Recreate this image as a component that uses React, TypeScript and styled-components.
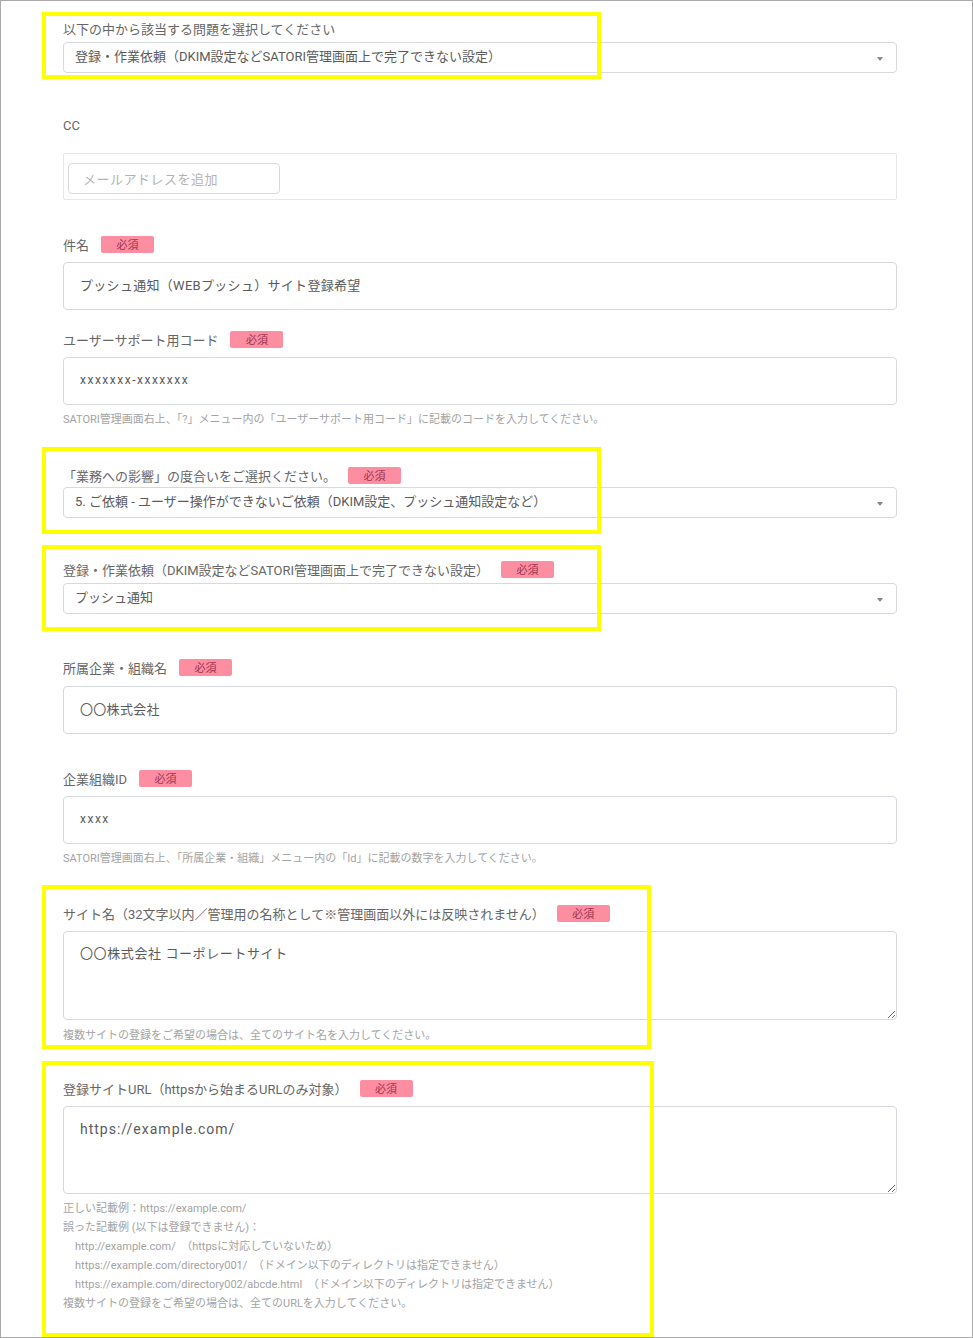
import React from 'react';
import styled, { createGlobalStyle } from 'styled-components';

const GlobalStyle = createGlobalStyle`
body {
  margin: 0;
  background: #fff;
  font-family: Roboto, "Noto Sans CJK JP", sans-serif;
}
`

const Frame = styled.div`
position: relative;
width: 973px;
height: 1338px;
box-sizing: border-box;
border: 1px solid #a9a9a9;
background: #fff;
padding: 0 75px 0 62px;
overflow: hidden;
`

const Form = styled.div`
display: flex;
flex-direction: column;
`

const Field = styled.div<{ $top: number }>`
display: flex;
flex-direction: column;
margin-top: ${p => p.$top}px;
`

const LabelRow = styled.div<{ $gap: number }>`
display: flex;
align-items: center;
gap: 12px;
height: 18px;
margin-bottom: ${p => p.$gap}px;
font-size: 13px;
color: #666;
white-space: nowrap;
`

const Badge = styled.span`
display: inline-flex;
align-items: center;
justify-content: center;
width: 53px;
height: 17px;
box-sizing: border-box;
border-radius: 2px;
background: #fd8ea1;
color: #9c3450;
font-size: 11px;
`

const SelectBox = styled.div`
position: relative;
display: flex;
align-items: center;
height: 31px;
box-sizing: border-box;
padding: 0 30px 5px 11px;
border: 1px solid #d6d9dd;
border-radius: 4px;
font-size: 13px;
color: #5a5a5a;
white-space: nowrap;

&::after {
  content: '';
  position: absolute;
  right: 13px;
  top: 50%;
  margin-top: -1px;
  border-left: 3.5px solid transparent;
  border-right: 3.5px solid transparent;
  border-top: 4px solid #888;
}
`

const TextInput = styled.input`
height: 48px;
box-sizing: border-box;
padding: 0 16px 3px;
border: 1px solid #d6d9dd;
border-radius: 4px;
font-family: Roboto, "Noto Sans CJK JP", sans-serif;
font-size: 13px;
letter-spacing: 0.3px;
color: #5a5a5a;
outline: none;
`

const CodeInput = styled(TextInput)`
font-size: 12px;
letter-spacing: 1.5px;
`

const TextArea = styled.textarea<{ $h: number }>`
height: ${p => p.$h}px;
box-sizing: border-box;
padding: 13px 16px;
border: 1px solid #d6d9dd;
border-radius: 4px;
font-family: Roboto, "Noto Sans CJK JP", sans-serif;
font-size: 13px;
line-height: 18px;
letter-spacing: 0.6px;
color: #5a5a5a;
outline: none;
resize: vertical;
`

const UrlArea = styled(TextArea)`
font-size: 14px;
letter-spacing: 1px;
`

const TagBox = styled.div`
height: 47px;
box-sizing: border-box;
padding: 9px 4px 5px;
border: 1px solid #e6e7e9;
border-radius: 2px;
`

const TagInput = styled.div`
display: flex;
align-items: center;
width: 212px;
height: 31px;
box-sizing: border-box;
padding: 0 14px;
border: 1px solid #d6d9dd;
border-radius: 4px;
font-size: 13px;
color: #b3b3b3;
letter-spacing: 0.5px;
`

const Hint = styled.div<{ $top: number; $lh: number }>`
margin-top: ${p => p.$top}px;
font-size: 11px;
line-height: ${p => p.$lh}px;
color: #a3a3a3;
white-space: nowrap;
`

const HintLine = styled.div<{ $indent?: boolean }>`
padding-left: ${p => (p.$indent ? 12 : 0)}px;
`

const Highlight = styled.div<{ $x: number; $y: number; $w: number; $h: number }>`
position: absolute;
left: ${p => p.$x}px;
top: ${p => p.$y}px;
width: ${p => p.$w}px;
height: ${p => p.$h}px;
box-sizing: border-box;
border: 4px solid #ffff00;
pointer-events: none;
`

const Required = () => <Badge>必須</Badge>

export default function App() {
    return (
        <>
            <GlobalStyle />
            <Frame>
                <Form>
                    <Field $top={18}>
                        <LabelRow $gap={5}>以下の中から該当する問題を選択してください</LabelRow>
                        <SelectBox>登録・作業依頼（DKIM設定などSATORI管理画面上で完了できない設定）</SelectBox>
                    </Field>

                    <Field $top={43}>
                        <LabelRow $gap={19}>CC</LabelRow>
                        <TagBox>
                            <TagInput>メールアドレスを追加</TagInput>
                        </TagBox>
                    </Field>

                    <Field $top={35}>
                        <LabelRow $gap={9}>件名<Required /></LabelRow>
                        <TextInput defaultValue="プッシュ通知（WEBプッシュ）サイト登録希望" />
                    </Field>

                    <Field $top={20}>
                        <LabelRow $gap={9}>ユーザーサポート用コード<Required /></LabelRow>
                        <CodeInput defaultValue="xxxxxxx-xxxxxxx" />
                        <Hint $top={7} $lh={16}>SATORI管理画面右上、「?」メニュー内の「ユーザーサポート用コード」に記載のコードを入力してください。</Hint>
                    </Field>

                    <Field $top={38}>
                        <LabelRow $gap={3}>「業務への影響」の度合いをご選択ください。<Required /></LabelRow>
                        <SelectBox>5. ご依頼 - ユーザー操作ができないご依頼（DKIM設定、プッシュ通知設定など）</SelectBox>
                    </Field>

                    <Field $top={42}>
                        <LabelRow $gap={5}>登録・作業依頼（DKIM設定などSATORI管理画面上で完了できない設定）<Required /></LabelRow>
                        <SelectBox>プッシュ通知</SelectBox>
                    </Field>

                    <Field $top={44}>
                        <LabelRow $gap={10}>所属企業・組織名<Required /></LabelRow>
                        <TextInput defaultValue="〇〇株式会社" />
                    </Field>

                    <Field $top={35}>
                        <LabelRow $gap={9}>企業組織ID<Required /></LabelRow>
                        <CodeInput defaultValue="xxxx" />
                        <Hint $top={7} $lh={16}>SATORI管理画面右上、「所属企業・組織」メニュー内の「Id」に記載の数字を入力してください。</Hint>
                    </Field>

                    <Field $top={37}>
                        <LabelRow $gap={9}>サイト名（32文字以内／管理用の名称として※管理画面以外には反映されません）<Required /></LabelRow>
                        <TextArea $h={89} defaultValue="〇〇株式会社 コーポレートサイト" />
                        <Hint $top={8} $lh={16}>複数サイトの登録をご希望の場合は、全てのサイト名を入力してください。</Hint>
                    </Field>

                    <Field $top={35}>
                        <LabelRow $gap={9}>登録サイトURL（httpsから始まるURLのみ対象）<Required /></LabelRow>
                        <UrlArea $h={88} defaultValue="https://example.com/" />
                        <Hint $top={5} $lh={19}>
                            <HintLine>正しい記載例：https://example.com/</HintLine>
                            <HintLine>誤った記載例 (以下は登録できません)：</HintLine>
                            <HintLine $indent>http://example.com/　（httpsに対応していないため）</HintLine>
                            <HintLine $indent>https://example.com/directory001/　（ドメイン以下のディレクトリは指定できません）</HintLine>
                            <HintLine $indent>https://example.com/directory002/abcde.html　（ドメイン以下のディレクトリは指定できません）</HintLine>
                            <HintLine>複数サイトの登録をご希望の場合は、全てのURLを入力してください。</HintLine>
                        </Hint>
                    </Field>
                </Form>

                <Highlight $x={41} $y={11} $w={559} $h={67} />
                <Highlight $x={41} $y={446} $w={559} $h={87} />
                <Highlight $x={41} $y={544} $w={559} $h={86} />
                <Highlight $x={41} $y={884} $w={609} $h={164} />
                <Highlight $x={41} $y={1060} $w={612} $h={276} />
            </Frame>
        </>
    )
}
